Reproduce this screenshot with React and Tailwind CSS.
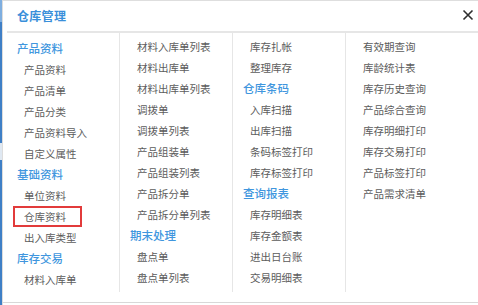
import React from "react";

const H = (t) => ({ t, h: true });
const cols = [
  {
    pt: "pt-[5px]",
    items: [
      H("产品资料"), "产品资料", "产品清单", "产品分类", "产品资料导入", "自定义属性",
      H("基础资料"), "单位资料", { t: "仓库资料", box: true }, "出入库类型",
      H("库存交易"), "材料入库单",
    ],
  },
  {
    pt: "pt-[3px]",
    items: [
      "材料入库单列表", "材料出库单", "材料出库单列表", "调拨单", "调拨单列表", "产品组装单",
      "产品组装列表", "产品拆分单", "产品拆分单列表", H("期末处理"), "盘点单", "盘点单列表",
    ],
  },
  {
    pt: "pt-[3px]",
    items: [
      "库存扎帐", "整理库存", H("仓库条码"), "入库扫描", "出库扫描", "条码标签打印",
      "库存标签打印", H("查询报表"), "库存明细表", "库存金额表", "进出日台账", "交易明细表",
    ],
  },
  {
    pt: "pt-[3px]",
    items: [
      "有效期查询", "库龄统计表", "库存历史查询", "产品综合查询", "库存明细打印",
      "库存交易打印", "产品标签打印", "产品需求清单",
    ],
  },
];

function Row({ it }) {
  if (typeof it === "string") {
    return (
      <div className="h-[21px] leading-[21px] pl-[17px] text-[10.5px] text-[#5c5c5c] whitespace-nowrap">
        {it}
      </div>
    );
  }
  if (it.h) {
    return (
      <div className="h-[21px] leading-[21px] pl-[10px] text-[11.5px] font-medium text-[#4096de] whitespace-nowrap">
        {it.t}
      </div>
    );
  }
  return (
    <div className="h-[21px] flex">
      <div className="ml-[6px] w-[69px] h-[21px] border-2 border-[#e23b3b] pl-[9px] text-[10.5px] leading-[17px] text-[#5c5c5c] whitespace-nowrap">
        {it.t}
      </div>
    </div>
  );
}

export default function App() {
  return (
    <div
      className="w-[478px] h-[305px] bg-white flex overflow-hidden"
      style={{ fontFamily: '"Noto Sans CJK SC", "Noto Sans", sans-serif' }}
    >
      <div className="w-[2px] h-full flex flex-col">
        <div className="h-[22px] bg-[#7eaee0]" />
        <div className="h-[121px] bg-[#3f7fc6]" />
        <div className="h-[17px] bg-[#dfe8f2]" />
        <div className="flex-1 bg-[#3f7fc6]" />
      </div>
      <div className="w-px h-full bg-[#dcdcdc]" />
      <div className="flex-1 flex flex-col border-t border-[#dedede]">
        <div className="h-[30px] flex items-center justify-between pl-[14px] pr-[4px]">
          <span className="text-[12px] font-semibold text-[#3a8fda] tracking-[0.3px]">仓库管理</span>
          <svg width="12" height="12" viewBox="0 0 12 12" className="mb-[3px]">
            <path d="M1.5 1.5 L10.5 10.5 M10.5 1.5 L1.5 10.5" stroke="#2e2e2e" strokeWidth="1.6" />
          </svg>
        </div>
        <div className="ml-[4px] h-[2px] bg-[#e6e6e6]" />
        <div className="ml-[4px] flex h-[259px]">
          {cols.map((c, i) => (
            <div
              key={i}
              className={`w-[113px] h-full ${c.pt} ${i < 3 ? "border-r border-[#e6e6e6]" : ""}`}
            >
              {c.items.map((it, j) => (
                <Row key={j} it={it} />
              ))}
            </div>
          ))}
        </div>
        <div className="mt-[10px] h-px bg-[#d8d8d8]" />
      </div>
    </div>
  );
}
